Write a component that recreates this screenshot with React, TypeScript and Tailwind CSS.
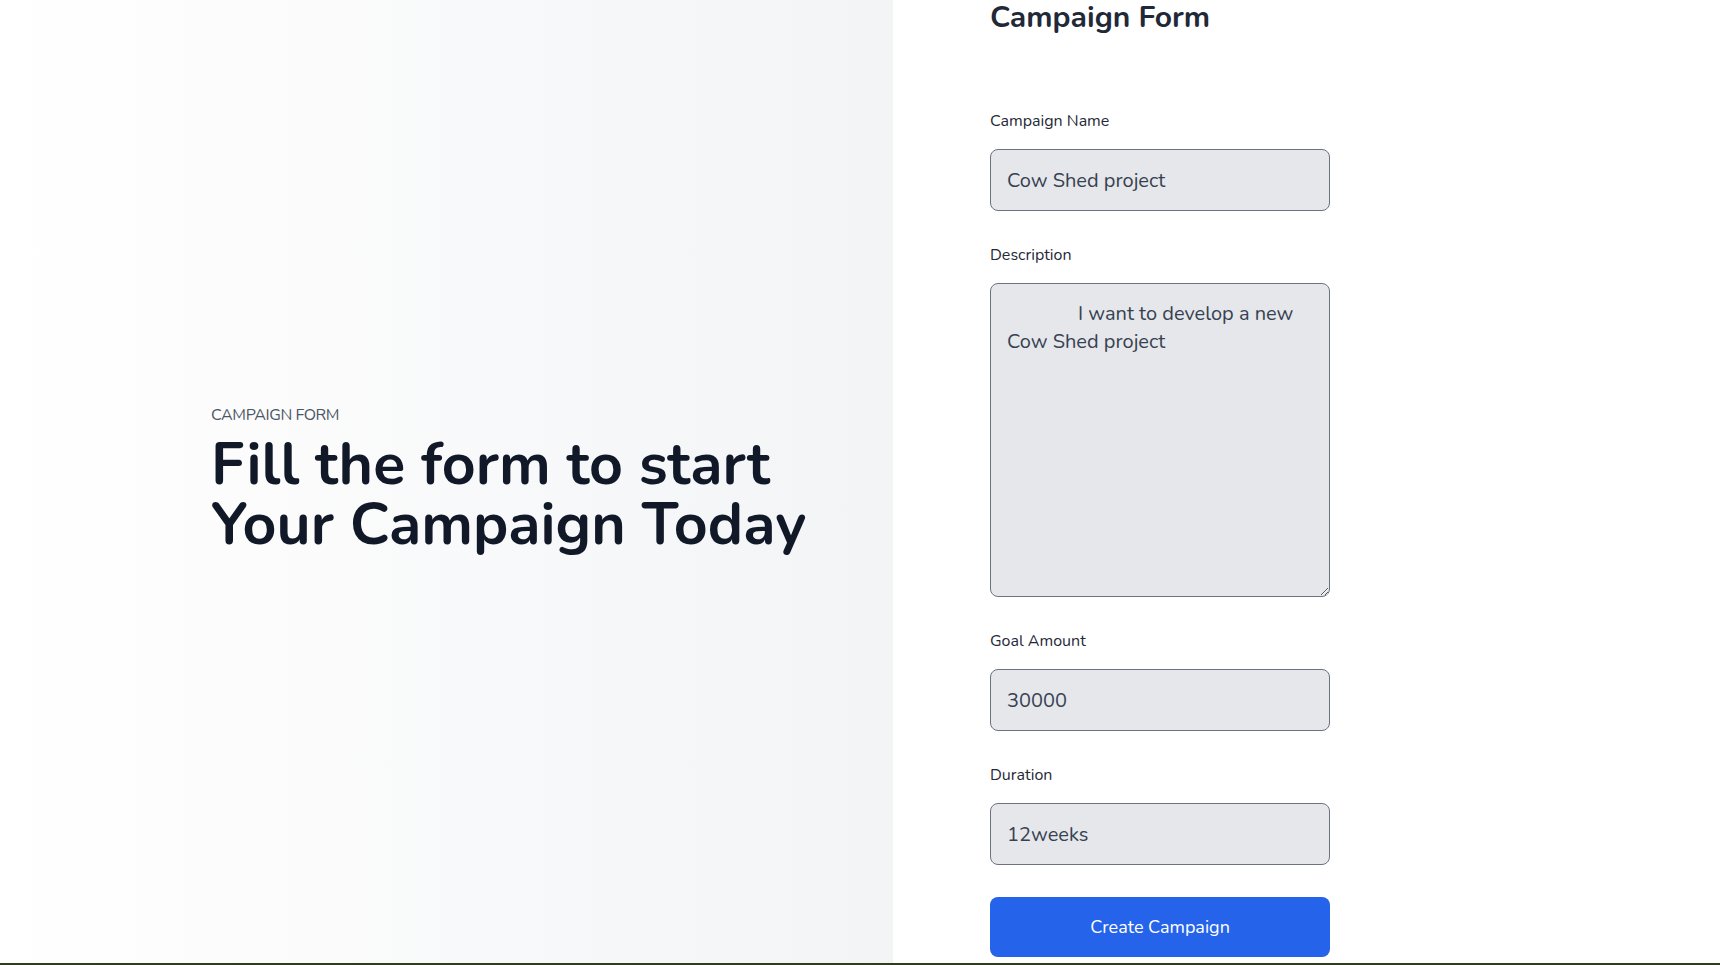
import { useState } from 'react';

const fieldClass =
  'block w-full rounded-lg border border-[#6b7280] bg-[#e5e7eb] px-4 text-xl text-[#374151] outline-none';

export default function App() {
  const [name, setName] = useState('Cow Shed project');
  const [description, setDescription] = useState('I want to develop a new Cow Shed project');
  const [goal, setGoal] = useState('30000');
  const [duration, setDuration] = useState('12weeks');

  return (
    <div
      className="flex h-[965px] flex-col bg-white"
      style={{ fontFamily: 'Nunito, Lato, "Open Sans", sans-serif' }}
    >
      <div className="flex flex-1 min-h-0">
        {/* left intro panel */}
        <div className="flex w-[893px] flex-col justify-center bg-linear-to-r from-white to-[#f3f4f6] pb-[6px] pl-[211px]">
          <p className="text-base uppercase tracking-tight text-[#4b5563]">Campaign Form</p>
          <h1 className="mt-2 text-[59px] font-bold leading-[60px] text-[#111827]">
            Fill the form to start
            <br />
            Your Campaign Today
          </h1>
        </div>

        {/* form */}
        <div className="pl-[97px]">
          <form className="w-[340px]" onSubmit={(e) => e.preventDefault()}>
            <h2 className="text-3xl font-bold text-[#1f2937]">Campaign Form</h2>

            <div className="mt-[73px]">
              <label className="block text-base text-[#1f2937]">Campaign Name</label>
              <input
                type="text"
                value={name}
                onChange={(e) => setName(e.target.value)}
                className={`${fieldClass} mt-4 h-[62px]`}
              />
            </div>

            <div className="mt-8">
              <label className="block text-base text-[#1f2937]">Description</label>
              <textarea
                value={description}
                onChange={(e) => setDescription(e.target.value)}
                className={`${fieldClass} mt-4 h-[314px] py-4 leading-7 indent-[71px]`}
              />
            </div>

            <div className="mt-8">
              <label className="block text-base text-[#1f2937]">Goal Amount</label>
              <input
                type="text"
                value={goal}
                onChange={(e) => setGoal(e.target.value)}
                className={`${fieldClass} mt-4 h-[62px]`}
              />
            </div>

            <div className="mt-8">
              <label className="block text-base text-[#1f2937]">Duration</label>
              <input
                type="text"
                value={duration}
                onChange={(e) => setDuration(e.target.value)}
                className={`${fieldClass} mt-4 h-[62px]`}
              />
            </div>

            <button
              type="submit"
              className="mt-8 h-[60px] w-full rounded-lg bg-[#2563eb] text-lg text-white hover:bg-[#1d4ed8]"
            >
              Create Campaign
            </button>
          </form>
        </div>
      </div>
      <div className="h-[2px] bg-[#2f3d1f]" />
    </div>
  );
}
